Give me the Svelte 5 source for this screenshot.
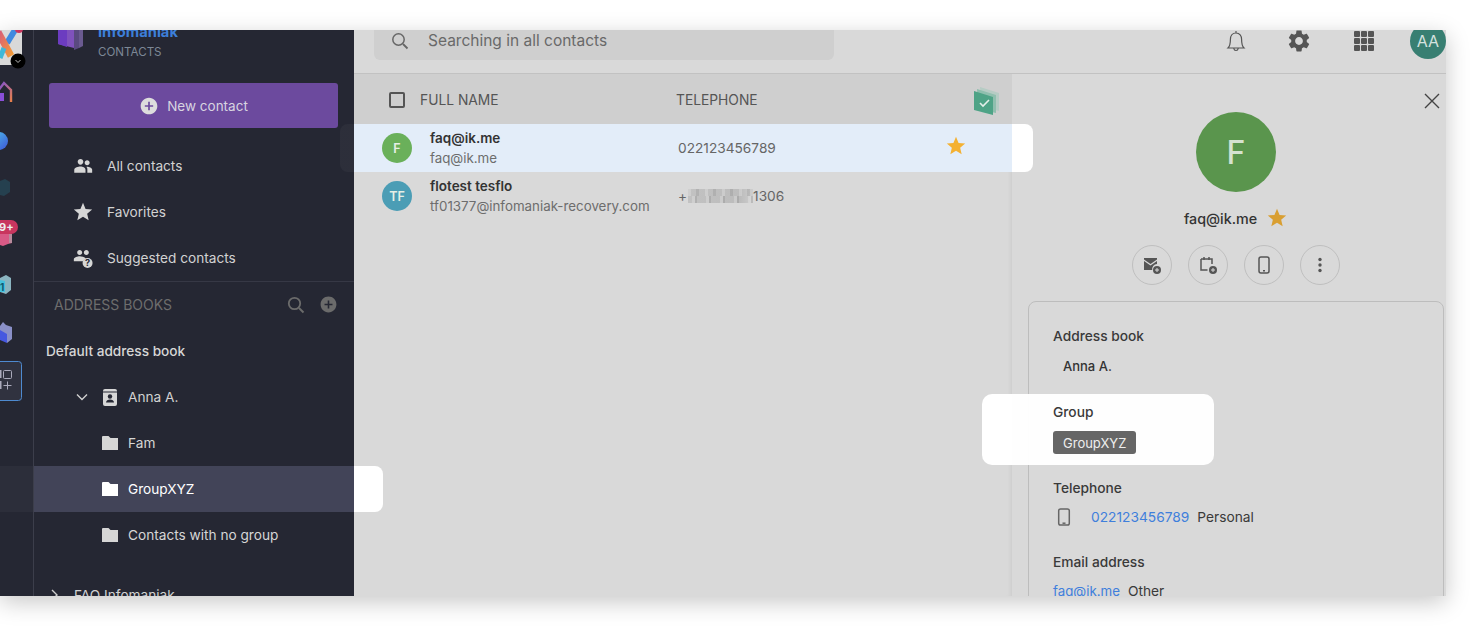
<script>
  const star = "M12 17.27 18.18 21l-1.64-7.03L22 9.24l-7.19-.61L12 2 9.19 8.63 2 9.24l5.46 4.73L5.82 21z";
  const plusCircle = "M12 2C6.48 2 2 6.48 2 12s4.48 10 10 10 10-4.48 10-10S17.52 2 12 2zm5 11h-4v4h-2v-4H7v-2h4V7h2v4h4v2z";
  const folder = "M0 1a1 1 0 0 1 1-1h5.500l2 2H16v12H0z";
  const contacts = [
    { initials: "F", cls: "green", name: "faq@ik.me", mail: "faq@ik.me", selected: true },
    { initials: "TF", cls: "teal", name: "flotest tesflo", mail: "tf01377@infomaniak-recovery.com", selected: false }
  ];
  const groups = [
    { label: "Fam", active: false },
    { label: "GroupXYZ", active: true },
    { label: "Contacts with no group", active: false }
  ];
</script>

<div class="page">
  <div class="window">
    <aside class="rail">
      <svg class="rail-art" width="33" height="566" viewBox="0 30 33 566" aria-hidden="true">
        <defs>
          <linearGradient id="xg" x1="0" y1="0" x2="1" y2="1"><stop offset="0" stop-color="#d8597a"/><stop offset="1" stop-color="#f09a3a"/></linearGradient>
          <linearGradient id="hg" x1="0" y1="0" x2="1" y2="1"><stop offset="0" stop-color="#7a4fd8"/><stop offset="1" stop-color="#e8804a"/></linearGradient>
          <linearGradient id="dg" x1="0" y1="0" x2="1" y2="1"><stop offset="0" stop-color="#4fc3e8"/><stop offset="1" stop-color="#3d55d8"/></linearGradient>
        </defs>
        <rect x="0" y="28" width="22" height="37" fill="#d9d9d9"/>
        <path d="M15 30L7 43" stroke="#3f8ae0" stroke-width="6" fill="none"/>
        <path d="M-2 32L11 56" stroke="url(#xg)" stroke-width="7" fill="none"/>
        <path d="M0 58L4 48" stroke="#3fb8d8" stroke-width="5" fill="none"/>
        <circle cx="18" cy="61" r="7.500" fill="#000"/>
        <path d="M15.500 60l2.500 2.500 2.500-2.500" fill="none" stroke="#bbb" stroke-width="1"/>
        <circle cx="19" cy="29" r="4" fill="#c8365f"/>

        <path d="M-2 91l6-8 7 7v12" fill="none" stroke="url(#hg)" stroke-width="2.400"/>
        <rect x="0" y="93" width="4" height="8" fill="#8a4fd8"/>

        <circle cx="-1" cy="141" r="9" fill="url(#dg)"/>

        <path d="M0 181l5-2 5 3v10l-6 4-4-1z" fill="#25404f"/>

        <path d="M0 233h9l3 1v9l-4 1-5 2-3-1z" fill="#d85a86"/>
        <rect x="9" y="234" width="3" height="9" fill="#b88a9c"/>
        <rect x="-8" y="220" width="26" height="14" rx="7" fill="#c8365f"/>
        <text class="badge-text" x="-1" y="231">9+</text>

        <path d="M0 278l6-3 5 3v12l-5 4-6-2z" fill="#8ab4c0"/>
        <path d="M0 280l5 1v11l-5 0z" fill="#46c0dc"/>
        <text class="teal-text" x="0" y="291">1</text>

        <path d="M0 326l3-4 3 3 6 2v12l-5 4v-3l-7-2z" fill="#8a90c8"/>
        <path d="M0 330l7 4v9l-7-3z" fill="#4658e0"/>

        <rect x="-6" y="361.500" width="27.500" height="39" rx="3" fill="#30323f" stroke="#4e8ad0"/>
        <rect x="0" y="370" width="1.500" height="8" fill="#aab"/>
        <rect x="3.500" y="370.500" width="8" height="8" rx="1" fill="none" stroke="#aab"/>
        <rect x="0" y="381" width="1.500" height="8" fill="#aab"/>
        <path d="M7.500 381.500v8M3.500 385.500h8" stroke="#aab" fill="none"/>
      </svg>
    </aside>

    <aside class="sidebar">
      <div class="brand">
        <svg class="brand-logo" width="28" height="30" viewBox="0 0 28 30" aria-hidden="true">
          <path d="M22 0h4v22l-4 2z" fill="#6a5a90"/>
          <path d="M1 0h21v24l-5 0-16-4z" fill="#8052bd"/>
          <path d="M1 0h9v23l-9-3z" fill="#6c3cc0"/>
          <path d="M17 0h5v24l-5 2z" fill="#5a4a80"/>
        </svg>
        <div class="brand-text">
          <div class="brand-name">Infomaniak</div>
          <div class="brand-sub">CONTACTS</div>
        </div>
      </div>

      <button class="new-btn">
        <svg width="20" height="20" viewBox="0 0 24 24" aria-hidden="true"><path d={plusCircle} fill="#ddd"/></svg>
        <span>New contact</span>
      </button>

      <nav class="nav">
        <div class="row nav-row">
          <svg width="20" height="20" viewBox="0 0 24 24" aria-hidden="true"><path fill="#d6d6d6" d="M17 11c1.660 0 2.990-1.340 2.990-3S18.660 5 17 5c-1.660 0-3 1.340-3 3s1.340 3 3 3zm-8-.500c1.900 0 3.400-1.600 3.400-3.500S10.900 3.500 9 3.500 5.600 5.100 5.600 7s1.500 3.500 3.400 3.500zM9 12.500c-2.600 0-7.500 1.300-7.500 4V20H15v-3.500c0-2.700-3.400-4-6-4zm8 .500c-.300 0-.600 0-1 .100 1.200.800 1.200 2 1.200 3.400V20H23v-3.500c0-2.300-3.700-3.500-6-3.500z"/></svg>
          <span>All contacts</span>
        </div>
        <div class="row nav-row">
          <svg width="22" height="22" viewBox="0 0 24 24" class="star-nav" aria-hidden="true"><path fill="#d6d6d6" d={star}/></svg>
          <span>Favorites</span>
        </div>
        <div class="row nav-row">
          <svg width="20" height="20" viewBox="0 0 24 24" aria-hidden="true">
            <path fill="#d6d6d6" d="M8 8.500c1.700 0 3-1.300 3-3s-1.300-3-3-3-3 1.300-3 3 1.300 3 3 3zm8 0c1.700 0 3-1.300 3-3s-1.300-3-3-3-3 1.300-3 3 1.300 3 3 3zM8 10c-2.300 0-7 1.200-7 3.500V16h11.500c.400-1.500 1.600-2.800 3-3.400C14 10.800 10 10 8 10z"/>
            <circle cx="17.500" cy="18" r="6" fill="#d6d6d6"/>
            <text class="q-mark" x="17.500" y="22">?</text>
          </svg>
          <span>Suggested contacts</span>
        </div>
      </nav>

      <div class="books-head">
        <span>ADDRESS BOOKS</span>
        <div class="books-tools">
          <svg width="18" height="18" viewBox="0 0 18 18" aria-hidden="true"><circle cx="7.500" cy="7.500" r="5.700" fill="none" stroke="#6b6b6b" stroke-width="1.800"/><path d="M12 12l4.500 4.500" stroke="#6b6b6b" stroke-width="2"/></svg>
          <svg width="19" height="19" viewBox="0 0 24 24" aria-hidden="true"><path d={plusCircle} fill="#6b6b6b"/></svg>
        </div>
      </div>

      <div class="row default-book">Default address book</div>

      <div class="row tree-row">
        <svg class="chev" width="12" height="12" viewBox="0 0 12 12" aria-hidden="true"><path d="M1 3.500l5 5 5-5" fill="none" stroke="#d0d0d0" stroke-width="1.400"/></svg>
        <svg class="book" width="14" height="17" viewBox="0 0 14 17" aria-hidden="true">
          <path fill="#d6d6d6" d="M2 0h10a2 2 0 0 1 2 2v13a2 2 0 0 1-2 2H2a2 2 0 0 1-2-2V2a2 2 0 0 1 2-2z"/>
          <rect x="0" y="2.500" width="14" height="1" fill="#252733"/>
          <circle cx="7" cy="7.500" r="2.200" fill="#252733"/>
          <path d="M3 13.500c0-2 2-3 4-3s4 1 4 3z" fill="#252733"/>
        </svg>
        <span>Anna A.</span>
      </div>

      {#each groups as g}
        <div class="row group-row" class:active={g.active}>
          <svg width="16" height="14" viewBox="0 0 16 14" aria-hidden="true"><path d={folder} fill="currentColor"/></svg>
          <span>{g.label}</span>
        </div>
      {/each}

      <div class="row faq-row">
        <svg width="9" height="12" viewBox="0 0 9 12" aria-hidden="true"><path d="M2 1l5 5-5 5" fill="none" stroke="#d0d0d0" stroke-width="1.400"/></svg>
        <span>FAQ Infomaniak</span>
      </div>
    </aside>

    <main class="main">
      <header class="topbar">
        <div class="search">
          <svg width="18" height="18" viewBox="0 0 18 18" aria-hidden="true"><circle cx="7.500" cy="7.500" r="5.700" fill="none" stroke="#666" stroke-width="1.500"/><path d="M12 12l4.500 4.500" stroke="#666" stroke-width="1.800"/></svg>
          <span>Searching in all contacts</span>
        </div>
        <div class="tools">
          <svg class="t-bell" width="24" height="24" viewBox="0 0 24 24" aria-hidden="true"><path d="M12 2v2M12 4c-3.700 0-5.600 3-5.600 6.500 0 4.500-.6 6.800-2.400 8.500h16c-1.800-1.700-2.400-4-2.400-8.500C17.600 7 15.700 4 12 4zM9.800 19.500c.2 1.300 1.100 2 2.200 2s2-.7 2.200-2" fill="none" stroke="#555" stroke-width="1.200"/></svg>
          <svg class="t-gear" width="26" height="26" viewBox="0 0 24 24" aria-hidden="true"><path fill="#555" d="M19.140 12.940c.040-.300.060-.610.060-.940 0-.320-.020-.640-.070-.940l2.030-1.580c.180-.140.230-.410.120-.610l-1.920-3.320c-.120-.220-.370-.290-.590-.220l-2.390.960c-.500-.380-1.030-.700-1.620-.940l-.360-2.540c-.040-.240-.240-.410-.480-.410h-3.840c-.240 0-.430.170-.470.410l-.360 2.540c-.590.240-1.130.570-1.620.940l-2.390-.960c-.220-.080-.470 0-.590.220L2.740 8.870c-.120.210-.080.470.120.610l2.030 1.580c-.050.300-.090.630-.090.940s.020.640.070.940l-2.030 1.580c-.180.140-.230.410-.120.610l1.920 3.320c.120.220.370.290.590.220l2.390-.960c.500.380 1.030.700 1.620.940l.360 2.540c.050.240.240.410.480.410h3.840c.240 0 .440-.17.470-.41l.360-2.540c.590-.240 1.130-.560 1.620-.94l2.390.960c.220.080.470 0 .590-.22l1.920-3.320c.120-.220.070-.470-.120-.61l-2.010-1.580zM12 15.600c-1.980 0-3.600-1.620-3.600-3.600s1.620-3.600 3.600-3.600 3.600 1.620 3.600 3.600-1.620 3.600-3.600 3.600z"/></svg>
          <div class="t-grid" aria-hidden="true">
            {#each Array(9) as _}<i></i>{/each}
          </div>
          <div class="me">AA</div>
        </div>
      </header>

      <div class="content">
        <section class="list">
          <div class="list-head">
            <span class="check"></span>
            <span class="col-name">FULL NAME</span>
            <span class="col-tel">TELEPHONE</span>
            <svg class="shield" width="28" height="30" viewBox="0 0 28 30" aria-hidden="true">
              <path d="M7 1l19 6v18l-18-5z" fill="#b6ccc4"/>
              <path d="M4 3l19 6v18L5 23z" fill="#8fbfae"/>
              <path d="M1 5l19 6v18L1 24z" fill="#4ea386"/>
              <path d="M7 17l3 3 6-6" fill="none" stroke="#e4efe9" stroke-width="1.600"/>
            </svg>
          </div>
          {#each contacts as c}
            <div class="contact" class:selected={c.selected}>
              <div class="ava {c.cls}">{c.initials}</div>
              <div class="who">
                <div class="who-name">{c.name}</div>
                <div class="who-mail">{c.mail}</div>
              </div>
              {#if c.selected}
                <div class="tel">022123456789</div>
                <svg class="fav" width="22" height="22" viewBox="0 0 24 24" aria-hidden="true"><path fill="#f4b132" d={star}/></svg>
              {:else}
                <div class="tel">+<span class="blur"></span>1306</div>
              {/if}
            </div>
          {/each}
        </section>

        <section class="details">
          <svg class="close" width="16" height="16" viewBox="0 0 16 16" aria-hidden="true"><path d="M1 1l14 14M15 1L1 15" stroke="#444" stroke-width="1.400"/></svg>
          <div class="big-ava">F</div>
          <div class="big-name">
            <span>faq@ik.me</span>
            <svg width="22" height="22" viewBox="0 0 24 24" aria-hidden="true"><path fill="#d99f32" d={star}/></svg>
          </div>
          <div class="actions">
            <div class="act">
              <svg width="20" height="20" viewBox="0 0 20 20" aria-hidden="true"><path d="M2 3h13v1.500L8.500 9 2 4.500zM2 6l6.500 4.500L15 6v3a5 5 0 0 0-4.800 6H2z" fill="#555"/><circle cx="15" cy="15" r="4" fill="#555"/><path d="M15 13v4M13 15h4" stroke="#d9d9d9"/></svg>
            </div>
            <div class="act">
              <svg width="20" height="20" viewBox="0 0 20 20" aria-hidden="true"><path d="M3 4h11v5M9.500 15H3V4M6 2v3M11 2v3" fill="none" stroke="#555" stroke-width="1.500"/><circle cx="15" cy="15" r="4" fill="#555"/><path d="M15 13v4M13 15h4" stroke="#d9d9d9"/></svg>
            </div>
            <div class="act">
              <svg width="20" height="20" viewBox="0 0 20 20" aria-hidden="true"><rect x="5" y="2" width="10" height="16" rx="2" fill="none" stroke="#555" stroke-width="1.500"/><path d="M9 15.800h2" stroke="#555" stroke-width="1.500"/></svg>
            </div>
            <div class="act">
              <svg width="20" height="20" viewBox="0 0 20 20" aria-hidden="true"><circle cx="10" cy="4.500" r="1.700" fill="#555"/><circle cx="10" cy="10" r="1.700" fill="#555"/><circle cx="10" cy="15.500" r="1.700" fill="#555"/></svg>
            </div>
          </div>

          <div class="card">
            <div class="label">Address book</div>
            <div class="owner">Anna A.</div>
            <div class="group-block">
              <div class="label">Group</div>
              <div class="tag">GroupXYZ</div>
            </div>
            <div class="label l-tel">Telephone</div>
            <div class="value">
              <svg class="phone" width="14" height="18" viewBox="0 0 14 18" aria-hidden="true"><rect x="1.700" y="1" width="10.600" height="16" rx="1.800" fill="none" stroke="#666" stroke-width="1.500"/><path d="M5.500 15.200h3" stroke="#666" stroke-width="1.500"/></svg>
              <a href="#tel" class="link">022123456789</a>
              <span>Personal</span>
            </div>
            <div class="label l-mail">Email address</div>
            <div class="value">
              <a href="#mail" class="link mail">faq@ik.me</a>
              <span>Other</span>
            </div>
          </div>
        </section>
      </div>
    </main>

    <div class="spot spot-row"></div>
    <div class="spot spot-nav"></div>
    <div class="spot spot-rail"></div>
    <div class="spot spot-group"></div>
  </div>
</div>

<style>
  :global(body) { margin: 0; background: #fff; }
  .page {
    position: relative;
    width: 1476px; height: 626px; padding-top: 30px; box-sizing: border-box;
    background: #fff; overflow: hidden;
    font-family: Inter, "Liberation Sans", sans-serif; font-size: 14px;
  }
  .window {
    position: relative; display: flex; width: 1446px; height: 566px; overflow: hidden;
    background: #d9d9d9; box-shadow: 0 6px 22px rgba(0, 0, 0, .22);
  }

  .rail { width: 33px; flex: none; background: #252733; border-right: 1px solid #3c3e4b; }
  .rail-art { display: block; }
  .badge-text { font: 700 11px Inter, sans-serif; fill: #eee; }
  .teal-text { font: 700 10px Inter, sans-serif; fill: #0e5a70; }

  .sidebar { width: 320px; flex: none; background: #252733; color: #d2d2d2; overflow: hidden; font-size: 13.650px; }
  .brand { display: flex; height: 53px; padding-left: 23px; box-sizing: border-box; }
  .brand-logo { flex: none; margin-top: -6px; }
  .brand-text { margin-left: 13px; margin-top: -8px; }
  .brand-name { font-size: 14.700px; font-weight: 700; line-height: 20px; color: #3d7fd9; }
  .brand-sub { font-size: 11.600px; line-height: 20px; color: #7d8896; }

  .new-btn {
    display: flex; align-items: center; justify-content: center; gap: 8px;
    width: 289px; height: 45px; margin-left: 15px; padding: 0;
    background: #6c4a9e; border: 0; border-radius: 3px; color: #d8d4e0;
    font: 400 13.500px Inter, sans-serif;
  }
  .row { display: flex; align-items: center; height: 46px; box-sizing: border-box; }
  .nav { margin-top: 15px; border-bottom: 1px solid #363845; }
  .nav-row { padding-left: 39px; gap: 14px; }
  .star-nav { margin: 0 -1px; }
  .q-mark { font: 700 11px Inter, sans-serif; fill: #252733; text-anchor: middle; }

  .books-head {
    display: flex; align-items: center; justify-content: space-between;
    height: 46px; padding: 0 16px 1px 20px; box-sizing: border-box; color: #6d6d6d; font-size: 14px;
  }
  .books-tools { display: flex; align-items: center; gap: 14px; }
  .default-book { padding-left: 12px; font-weight: 500; color: #d6d6d6; }
  .tree-row { padding-left: 42px; }
  .chev { margin-right: 15px; }
  .book { margin-right: 11px; }
  .group-row { padding-left: 68px; gap: 10px; color: #d6d6d6; }
  .group-row.active { background: #424458; color: #fff; }
  .faq-row { margin-top: 14px; padding-left: 16px; gap: 15px; }

  .main { flex: 1; min-width: 0; display: flex; flex-direction: column; }
  .topbar { height: 43px; flex: none; display: flex; align-items: flex-start; justify-content: space-between; border-bottom: 1px solid #c2c2c2; }
  .search {
    display: flex; align-items: center; gap: 19px;
    width: 460px; height: 30px; margin-left: 20px; padding: 0 0 9px 17px; box-sizing: border-box;
    background: #cfcfcf; border-radius: 0 0 6px 6px; color: #696969; font-size: 15.500px;
  }
  .tools { display: flex; align-items: center; height: 22px; }
  .t-gear { margin-left: 38px; }
  .t-grid {
    display: grid; grid-template-columns: repeat(3, 6px); grid-auto-rows: 6px; gap: 1px; margin-left: 42px;
    width: 20px; height: 20px;
  }
  .t-grid i { background: #555; border-radius: 1px; }
  .me {
    display: flex; align-items: center; justify-content: center;
    flex: none; width: 36px; height: 36px; margin-left: 36px; border-radius: 50%;
    background: #387f72; color: #d4e2df; font-size: 16px; font-weight: 400;
  }

  .content { flex: 1; display: flex; min-height: 0; }
  .list { width: 658px; flex: none; box-shadow: inset -4px 0 4px -3px rgba(0, 0, 0, .07); }
  .list-head { position: relative; display: flex; align-items: center; height: 50px; padding-top: 2px; box-sizing: border-box; background: #cfcfcf; color: #555; font-size: 13.800px; }
  .check { width: 16px; height: 16px; margin-left: 35px; box-sizing: border-box; border: 2px solid #555; border-radius: 2px; }
  .col-name { margin-left: 15px; width: 256px; }
  .shield { position: absolute; left: 619px; top: 12px; }

  .contact { position: relative; display: flex; align-items: center; height: 48px; color: #555; }
  .contact.selected { background: #e3edf9; }
  .ava {
    display: flex; align-items: center; justify-content: center;
    flex: none; width: 30px; height: 30px; margin-left: 28px; border-radius: 50%;
    color: #e6efe6; font-size: 12.500px; font-weight: 600;
  }
  .ava.green { background: #6ab05a; }
  .ava.teal { background: #4b9db5; }
  .who { width: 248px; margin-left: 18px; flex: none; }
  .who-name { font-size: 13.500px; line-height: 20px; font-weight: 600; color: #333; }
  .who-mail { font-size: 13.330px; line-height: 20px; color: #6d6d6d; white-space: nowrap; }
  .tel { font-size: 13.700px; color: #666; display: flex; align-items: center; }
  .blur {
    display: block; width: 65px; height: 14px; margin-left: 1px;
    background:
      repeating-linear-gradient(90deg, rgba(255, 255, 255, .22) 0 3px, transparent 3px 8px, rgba(0, 0, 0, .08) 8px 11px, transparent 11px 17px) 0 0 / 100% 7px no-repeat,
      repeating-linear-gradient(90deg, transparent 0 4px, rgba(255, 255, 255, .22) 4px 7px, rgba(0, 0, 0, .09) 7px 9px, transparent 9px 14px) 0 7px / 100% 7px no-repeat,
      linear-gradient(90deg, #c2c2c2, #bcbcbc 80%, #cecece);
  }
  .fav { position: absolute; left: 591px; top: 11px; }

  .details {
    position: relative; flex: 1; min-width: 0; padding: 38px 2px 0 16px;
    display: flex; flex-direction: column; align-items: center; box-sizing: border-box;
  }
  .close { position: absolute; right: 6px; top: 19px; }
  .big-ava {
    display: flex; align-items: center; justify-content: center; flex: none;
    width: 80px; height: 80px; border-radius: 50%; background: #5a954d;
    color: #d5e2d0; font-size: 32px; font-weight: 500;
  }
  .big-name {
    display: flex; align-items: center; gap: 9px; height: 20px; margin-top: 16px;
    font-weight: 500; color: #333; font-size: 14.300px;
  }
  .actions { display: flex; gap: 16px; margin-top: 17px; }
  .act {
    display: flex; align-items: center; justify-content: center;
    width: 40px; height: 40px; box-sizing: border-box; border: 1px solid #bfbfbf; border-radius: 50%;
  }
  .card {
    align-self: stretch; flex: none; margin-top: 16px; padding: 24px 0 0 24px; box-sizing: border-box;
    height: 320px; border: 1px solid #bdbdbd; border-radius: 8px; color: #333;
  }
  .label { line-height: 20px; font-weight: 500; color: #3a3a3a; font-size: 13.750px; }
  .owner { margin-top: 10px; padding-left: 10px; line-height: 20px; font-size: 13px; font-weight: 500; }
  .group-block { position: relative; z-index: 3; margin-top: 26px; }
  .tag {
    display: inline-flex; align-items: center; height: 23px; margin-top: 9px; padding: 0 10px;
    background: #666; border-radius: 3px; color: #eee; font-size: 13px; vertical-align: top;
  }
  .l-tel { margin-top: 24px; }
  .l-mail { margin-top: 25px; }
  .value { display: flex; align-items: center; gap: 8px; height: 20px; box-sizing: border-box; margin-top: 9px; color: #3a3a3a; font-size: 13.750px; }
  .phone { margin: 0 12px 0 4px; }
  .link { color: #3f7fdc; text-decoration: none; }
  .link.mail { font-size: 13.300px; }

  .spot { position: absolute; }
  .spot-row {
    left: 340px; top: 94px; width: 693px; height: 48px; border-radius: 8px;
    background: linear-gradient(90deg, rgba(255, 255, 255, .035) 14px, transparent 14px, transparent 672px, #fff 672px);
    z-index: 2;
  }
  .spot-nav {
    left: 354px; top: 436px; width: 29px; height: 46px; border-radius: 0 8px 8px 0;
    background: #fff; z-index: 2;
  }
  .spot-rail {
    left: 0; top: 436px; width: 33px; height: 46px; background: rgba(255, 255, 255, .035); z-index: 2;
  }
  .spot-group {
    left: 982px; top: 364px; width: 232px; height: 71px; border-radius: 10px; z-index: 2;
    background: linear-gradient(90deg, #fff 30px, rgba(255, 255, 255, .975) 30px);
  }
</style>
